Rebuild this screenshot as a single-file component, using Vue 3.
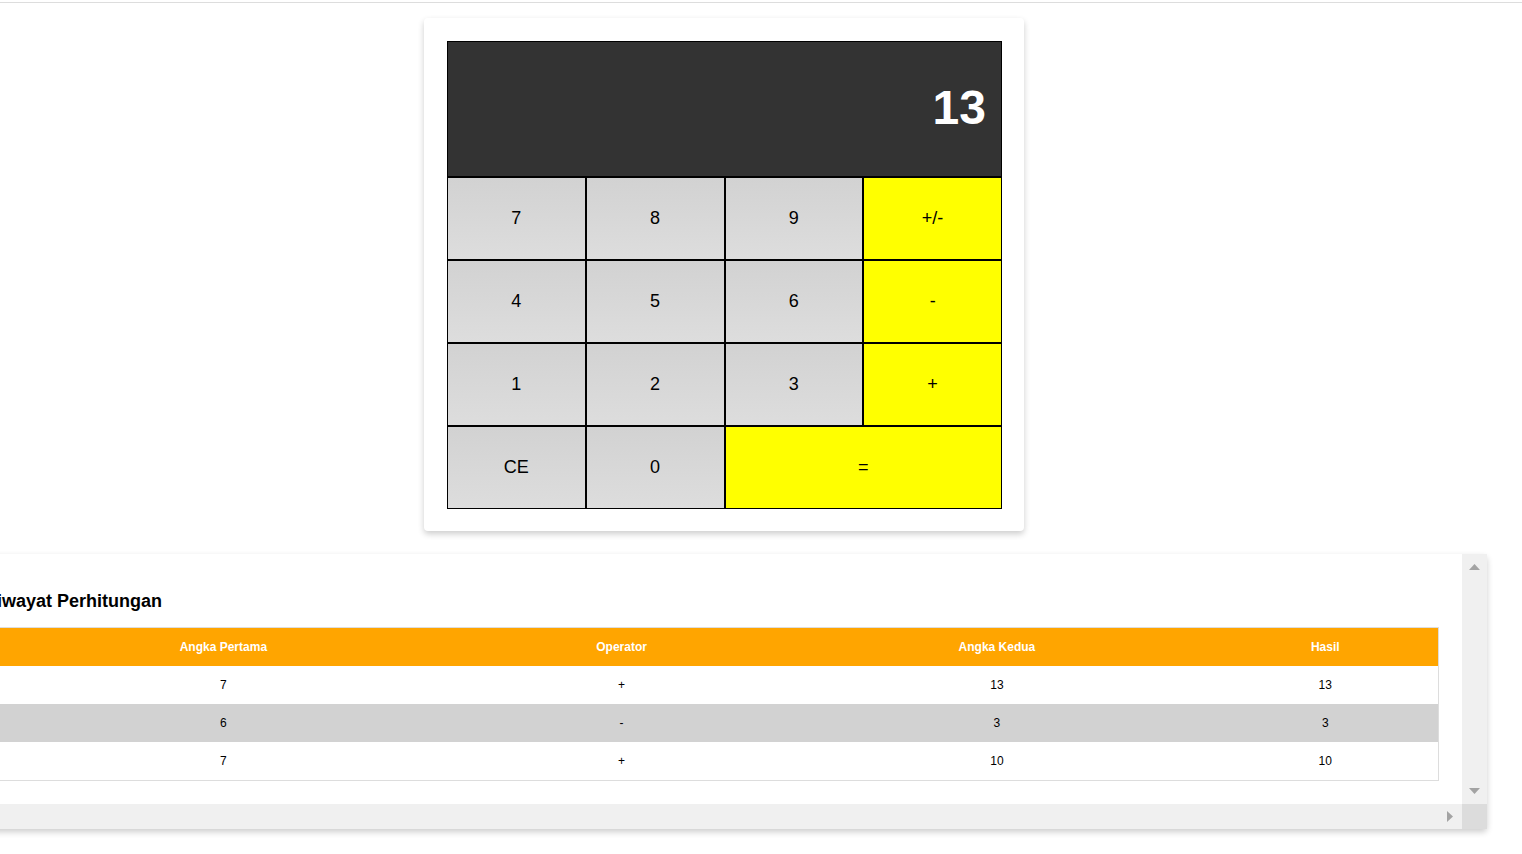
<script setup>
import { ref } from 'vue'

const display = ref('13')

const keys = [
  { label: '7' }, { label: '8' }, { label: '9' }, { label: '+/-', kind: 'operator' },
  { label: '4' }, { label: '5' }, { label: '6' }, { label: '-', kind: 'operator' },
  { label: '1' }, { label: '2' }, { label: '3' }, { label: '+', kind: 'operator' },
  { label: 'CE' }, { label: '0' }, { label: '=', kind: 'operator equals' },
]

const history = [
  { first: '7', operator: '+', second: '13', result: '13' },
  { first: '6', operator: '-', second: '3', result: '3' },
  { first: '7', operator: '+', second: '10', result: '10' },
]
</script>

<template>
  <div class="page">
    <header class="topbar"></header>
    <main class="content">
      <section class="card calculator">
        <output class="display">{{ display }}</output>
        <div class="keys">
          <button v-for="key in keys" :key="key.label" type="button" class="key" :class="key.kind">{{ key.label }}</button>
        </div>
      </section>

      <section class="card history">
        <div class="history-body">
          <h2>Riwayat Perhitungan</h2>
          <table>
            <thead>
              <tr>
                <th>Angka Pertama</th>
                <th>Operator</th>
                <th>Angka Kedua</th>
                <th>Hasil</th>
              </tr>
            </thead>
            <tbody>
              <tr v-for="(row, i) in history" :key="i">
                <td>{{ row.first }}</td>
                <td>{{ row.operator }}</td>
                <td>{{ row.second }}</td>
                <td>{{ row.result }}</td>
              </tr>
            </tbody>
          </table>
        </div>
        <div class="bar vertical">
          <svg width="11" height="6" viewBox="0 0 11 6"><path d="M0 6 5.5 0 11 6Z" /></svg>
          <svg width="11" height="6" viewBox="0 0 11 6"><path d="M0 0 5.5 6 11 0Z" /></svg>
        </div>
        <div class="bar horizontal">
          <svg width="6" height="11" viewBox="0 0 6 11"><path d="M6 0 0 5.5 6 11Z" /></svg>
          <svg width="6" height="11" viewBox="0 0 6 11"><path d="M0 0 6 5.5 0 11Z" /></svg>
        </div>
        <div class="corner"></div>
      </section>
    </main>
  </div>
</template>

<style>
body {
  margin: 0;
  background: #fff;
}
</style>

<style scoped>
.page {
  overflow: hidden;
  padding-bottom: 16px;
  font-family: "Liberation Sans", Arial, sans-serif;
  color: #000;
}
.topbar {
  height: 2px;
  border-bottom: 1px solid #ddd;
}
.content {
  display: flex;
  flex-direction: column;
  gap: 23px;
  margin: 15px 35px 0 -39px;
}
.card {
  box-sizing: border-box;
  background: #fff;
  border-radius: 4px;
  box-shadow: 0 3px 6px rgba(0, 0, 0, 0.2);
}
.calculator {
  width: 100%;
  max-width: 600px;
  margin: 0 auto;
  padding: 23px 22px 22px 23px;
}
.display {
  box-sizing: border-box;
  display: flex;
  align-items: center;
  justify-content: flex-end;
  height: 136px;
  padding: 0 15px 4px;
  border: 1px solid #000;
  background: #333;
  color: #fff;
  font-size: 48px;
  font-weight: bold;
}
.keys {
  display: grid;
  grid-template-columns: repeat(4, 1fr);
  grid-auto-rows: 83px;
}
.key {
  margin: 0;
  padding: 0;
  border: 1px solid #000;
  border-radius: 0;
  background: linear-gradient(to bottom, #d2d2d2, #ddd);
  color: #000;
  font-family: inherit;
  font-size: 18px;
}
.operator {
  background: #ff0;
}
.equals {
  grid-column: span 2;
}
.history {
  display: grid;
  grid-template-columns: 1fr 25px;
  grid-template-rows: auto 25px;
}
.history-body {
  padding: 23px;
}
h2 {
  margin: 14px 0 16px;
  font-size: 18px;
  line-height: 20px;
}
table {
  width: 100%;
  border: 1px solid #ddd;
  border-collapse: separate;
  border-spacing: 0;
  font-size: 12px;
  line-height: 14px;
  text-align: center;
}
th,
td {
  padding: 12px;
}
th {
  background: #ffa500;
  color: #fff;
}
tbody tr:nth-child(even) {
  background: #d2d2d2;
}
.bar {
  display: flex;
  align-items: center;
  justify-content: space-between;
  background: #f0f0f0;
}
.bar path {
  fill: #a3a3a3;
}
.vertical {
  flex-direction: column;
  padding: 10px 0;
}
.horizontal {
  padding: 0 9px;
}
.corner {
  background: #dcdcdc;
}
</style>
